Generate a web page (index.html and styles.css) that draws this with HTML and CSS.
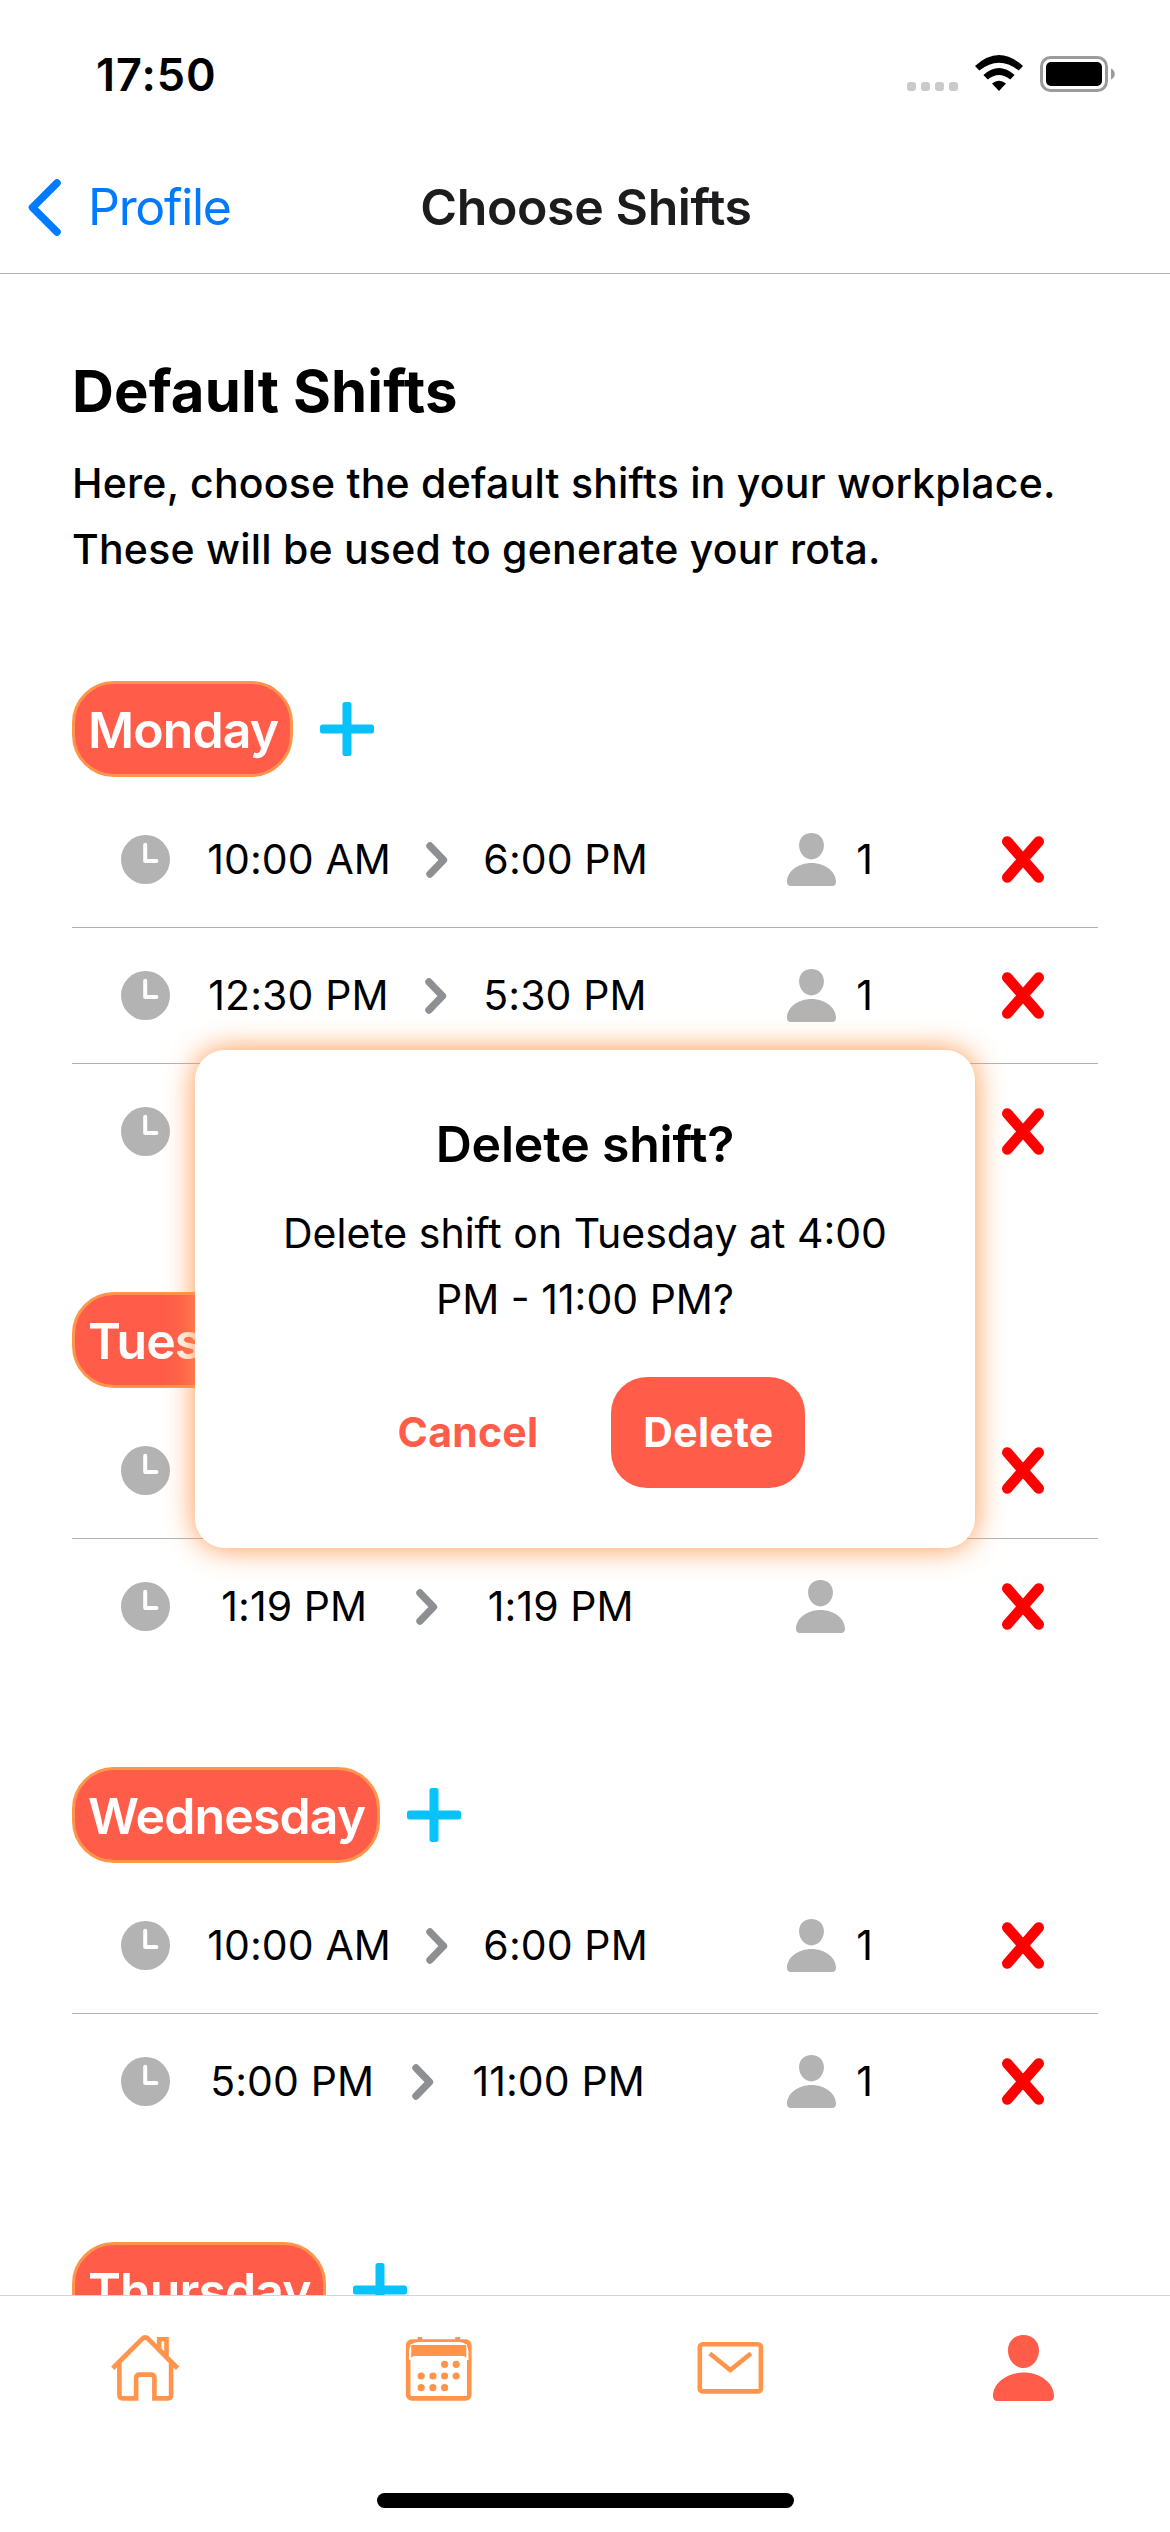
FILE: index.html
```html
<!DOCTYPE html>
<html lang="en">
<head>
<meta charset="utf-8">
<title>Choose Shifts</title>
<link rel="stylesheet" href="styles.css">
</head>
<body>
<svg class="sprite" aria-hidden="true">
  <symbol id="clock" viewBox="0 0 49 49"><circle cx="24.5" cy="24.5" r="24.5" fill="#b3b3b3"/><path d="M24.2 9.8V26H35.4" fill="none" stroke="#fff" stroke-width="4" stroke-linecap="round" stroke-linejoin="round"/></symbol>
  <symbol id="chevron" viewBox="0 0 22 36"><path d="M4 4L17.5 18L4 32" fill="none" stroke="#8e8f92" stroke-width="7.4" stroke-linecap="round" stroke-linejoin="round"/></symbol>
  <symbol id="person" viewBox="0 0 61 66"><path d="M30.5 0C39.8 0 46 6.6 46 15.4C46 25 38.8 33 30.5 33C22.2 33 15 25 15 15.4C15 6.6 21.2 0 30.5 0Z M30.5 37.5C47 37.5 61 48 61 61C61 64 59 66 56.5 66H4.5C2 66 0 64 0 61C0 48 14 37.5 30.5 37.5Z" fill="currentColor"/></symbol>
  <symbol id="plus" viewBox="0 0 54 54"><rect x="22.5" width="9" height="54" rx="2.5" fill="#07c2fb"/><rect y="22.5" width="54" height="9" rx="2.5" fill="#07c2fb"/></symbol>
  <symbol id="cross" viewBox="0 0 42 47"><path d="M5.3 5.5L36.7 41.5M36.7 5.5L5.3 41.5" stroke="#f00" stroke-width="10.6" stroke-linecap="round"/></symbol>
</svg>
<div class="screen">
  <header class="top">
    <div class="status">
      <span class="time">17:50</span>
      <span class="signal"><i></i><i></i><i></i><i></i></span>
      <svg class="wifi" viewBox="0 0 48 36"><path d="M0 11Q24 -11 48 11L43.7 15.5Q24 -0.2 4.3 15.5Z M8.4 20Q24 6 39.6 20L35.2 24.5Q24 15.300 12.800 24.500Z M17 28.600Q24 23 31 28.600L24 36Z"/></svg>
      <svg class="battery" viewBox="0 0 75 36"><rect x="1.5" y="1.5" width="65" height="33" rx="9" fill="none" stroke="#9b9b9b" stroke-width="3"/><rect x="6" y="6" width="56" height="24" rx="5"/><path d="M71 12.5C76 14.5 76 21.5 71 23.5Z" fill="#9b9b9b"/></svg>
    </div>
    <nav class="nav">
      <a class="back"><svg class="back-arrow" viewBox="0 0 33 57"><path d="M29 4L4.5 28.5L29 53" fill="none" stroke="#007aff" stroke-width="7.5" stroke-linecap="round" stroke-linejoin="round"/></svg><span>Profile</span></a>
      <h1>Choose Shifts</h1>
    </nav>
  </header>

  <main class="content">
    <h2>Default Shifts</h2>
    <p class="intro">Here, choose the default shifts in your workplace.<br>These will be used to generate your rota.</p>

    <section class="day">
      <div class="day-head"><span class="pill">Monday</span><svg class="plus"><use href="#plus"/></svg></div>
      <div class="shift"><svg class="clock"><use href="#clock"/></svg><div class="times"><span>10:00 AM</span><svg class="chev"><use href="#chevron"/></svg><span>6:00 PM</span></div><div class="people"><svg class="person"><use href="#person"/></svg><span>1</span></div><svg class="cross"><use href="#cross"/></svg></div>
      <div class="shift"><svg class="clock"><use href="#clock"/></svg><div class="times"><span>12:30 PM</span><svg class="chev"><use href="#chevron"/></svg><span>5:30 PM</span></div><div class="people"><svg class="person"><use href="#person"/></svg><span>1</span></div><svg class="cross"><use href="#cross"/></svg></div>
      <div class="shift"><svg class="clock"><use href="#clock"/></svg><div class="times"></div><div class="people"></div><svg class="cross"><use href="#cross"/></svg></div>
    </section>

    <section class="day">
      <div class="day-head"><span class="pill">Tuesday</span></div>
      <div class="shift"><svg class="clock"><use href="#clock"/></svg><div class="times"></div><div class="people"></div><svg class="cross"><use href="#cross"/></svg></div>
      <div class="shift"><svg class="clock"><use href="#clock"/></svg><div class="times"><span>1:19 PM</span><svg class="chev"><use href="#chevron"/></svg><span>1:19 PM</span></div><div class="people"><svg class="person"><use href="#person"/></svg><span></span></div><svg class="cross"><use href="#cross"/></svg></div>
    </section>

    <section class="day">
      <div class="day-head"><span class="pill">Wednesday</span><svg class="plus"><use href="#plus"/></svg></div>
      <div class="shift"><svg class="clock"><use href="#clock"/></svg><div class="times"><span>10:00 AM</span><svg class="chev"><use href="#chevron"/></svg><span>6:00 PM</span></div><div class="people"><svg class="person"><use href="#person"/></svg><span>1</span></div><svg class="cross"><use href="#cross"/></svg></div>
      <div class="shift"><svg class="clock"><use href="#clock"/></svg><div class="times"><span>5:00 PM</span><svg class="chev"><use href="#chevron"/></svg><span>11:00 PM</span></div><div class="people"><svg class="person"><use href="#person"/></svg><span>1</span></div><svg class="cross"><use href="#cross"/></svg></div>
    </section>

    <section class="day">
      <div class="day-head"><span class="pill">Thursday</span><svg class="plus"><use href="#plus"/></svg></div>
    </section>
  </main>

  <footer class="bottom">
    <div class="tabs">
      <svg class="tab" viewBox="0 0 68 68"><g fill="none" stroke="#ff944a" stroke-width="4.6"><path d="M0.8 34.2L30.2 4.9Q33.2 2.3 36.2 4.9L65.6 34.2" stroke-width="4.8"/><path d="M7.4 29V61Q7.400 64.400 10.600 64.400H24.100V44.200Q24.100 40.600 27.800 40.600H38.800Q42.400 40.600 42.400 44.200V64.400H55.900Q59.100 64.400 59.100 61V29"/><path d="M47.200 15.500V5.200H54.500V23L47.200 15.500"/></g></svg>
      <svg class="tab" viewBox="0 0 68 68"><rect x="3.2" y="7.6" width="61.1" height="56.8" rx="3.5" fill="none" stroke="#ff944a" stroke-width="4.6"/><path d="M4 26V18Q4.500 8 13 8H54.500Q63 8 63.500 18V26H61.500V24Q61 22 58 22H10Q6.500 22 6 24V26Z" fill="#fff"/><path d="M6.200 24V11H61.300V24Q60 22 57.500 22H10Q7.500 22 6.200 24Z" fill="#ff944a"/><path d="M12.600 6V3H17.200V6M50.200 6V3H55.200V6" fill="#ff944a"/><g fill="#ff944a"><circle cx="39.6" cy="30.3" r="3.6"/><circle cx="51.2" cy="30.3" r="3.6"/><circle cx="16.2" cy="42" r="3.6"/><circle cx="27.9" cy="42" r="3.6"/><circle cx="39.6" cy="42" r="3.6"/><circle cx="51.2" cy="42" r="3.6"/><circle cx="16.2" cy="53.7" r="3.6"/><circle cx="27.9" cy="53.7" r="3.6"/><circle cx="39.6" cy="53.7" r="3.6"/></g></svg>
      <svg class="tab" viewBox="0 0 68 68"><g fill="none" stroke="#ff944a" stroke-width="4.6"><rect x="2.8" y="10.3" width="61.1" height="47.1" rx="3"/><path d="M12.800 19.500L33.300 36L53.900 19.500"/></g></svg>
      <svg class="tab active"><use href="#person"/></svg>
    </div>
    <div class="home-bar"></div>
  </footer>

  <div class="dialog">
    <h3>Delete shift?</h3>
    <p>Delete shift on Tuesday at 4:00<br>PM - 11:00 PM?</p>
    <div class="actions"><button class="cancel">Cancel</button><button class="delete">Delete</button></div>
  </div>
</div>
</body>
</html>
```
FILE: styles.css
```css
* { box-sizing: border-box; margin: 0; padding: 0; }
body { background: #fff; }
svg { display: block; flex: none; }
.sprite { position: absolute; width: 0; height: 0; }

.screen {
  position: relative;
  width: 1170px;
  height: 2532px;
  display: flex;
  flex-direction: column;
  overflow: hidden;
  background: #fff;
  color: #000;
  font-family: Inter, "Liberation Sans", sans-serif;
  font-size: 41px;
}

.top { height: 274px; flex: none; border-bottom: 1px solid #b2b2b2; }
.status { display: flex; height: 141px; padding: 0 55px 0 96px; align-items: flex-start; }
.time { margin: 48px auto 0 0; font-size: 45px; line-height: 54px; font-weight: 600; letter-spacing: 1px; }
.signal { display: flex; gap: 5px; margin: 82px 17px 0 0; }
.signal i { width: 9px; height: 9px; border-radius: 3px; background: #cacaca; }
.wifi { width: 48px; height: 36px; margin: 55px 17px 0 0; }
.battery { width: 75px; height: 36px; margin-top: 56px; }

.nav { display: grid; grid-template-columns: 1fr auto 1fr; align-items: center; height: 132px; padding: 0 28px; }
.back { display: flex; align-items: center; gap: 27px; color: #007aff; font-size: 50px; line-height: 60px; letter-spacing: -1.3px; }
.back-arrow { width: 33px; height: 57px; }
.nav h1 { padding-left: 2px; color: #1c1c1e; font-size: 50px; line-height: 60px; font-weight: 600; letter-spacing: -0.4px; }

.content { flex: 1; min-height: 0; overflow: hidden; padding: 81px 72px 0; }
.content h2 { font-size: 58px; line-height: 72px; font-weight: 700; letter-spacing: 0.15px; }
.intro { margin-top: 23px; line-height: 66px; font-weight: 500; letter-spacing: 0.22px; white-space: nowrap; }

.day { margin-bottom: 92px; }
.intro + .day { margin-top: 99px; }
.day-head { display: flex; align-items: center; gap: 27px; height: 96px; margin-bottom: 15px; }
.pill {
  height: 96px;
  padding: 0 12px 0 13px;
  border: 3px solid #ff944a;
  border-radius: 42px;
  background: #ff5c49;
  color: #fff;
  font-size: 50px;
  line-height: 93px;
  font-weight: 600;
  letter-spacing: -0.9px;
}
.plus { width: 54px; height: 54px; }

.shift { display: grid; grid-template-columns: 49px 513px 294px 92px; align-items: center; height: 136px; padding-left: 49px; border-bottom: 1px solid #b2b2b2; }
.shift:last-child { border-bottom-color: transparent; }
.clock { width: 49px; height: 49px; }
.times { display: flex; align-items: center; justify-content: space-evenly; padding-left: 2px; letter-spacing: 0.1px; }
.times span, .people span { padding-bottom: 2px; }
.chev { width: 22px; height: 36px; }
.people { display: flex; align-items: center; justify-content: center; gap: 20px; }
.person { width: 49px; height: 53px; color: #b3b3b3; }
.cross { width: 42px; height: 47px; justify-self: center; }

.bottom { height: 237px; flex: none; border-top: 1px solid #d4d4d4; }
.tabs { display: grid; grid-template-columns: repeat(4, 1fr); justify-items: center; padding-top: 38px; }
.tab { width: 68px; height: 68px; overflow: visible; }
.tab.active { width: 61px; height: 66px; margin-top: 1px; color: #ff5c49; }
.home-bar { width: 417px; height: 15px; margin: 91px auto 0; border-radius: 8px; background: #000; }

.dialog {
  position: absolute;
  left: 195px;
  top: 1050px;
  width: 780px;
  height: 498px;
  padding-top: 60px;
  border-radius: 30px;
  background: #fff;
  box-shadow: 0 0 30px #ff944a;
  text-align: center;
}
.dialog h3 { font-size: 50px; line-height: 68px; font-weight: 600; letter-spacing: -0.2px; }
.dialog p { margin-top: 22px; line-height: 66px; white-space: nowrap; }
.actions { display: flex; justify-content: center; align-items: center; gap: 40px; margin-top: 45px; }
.actions button { height: 111px; padding-bottom: 2px; border: 0; border-radius: 36px; background: none; font: 700 41px Inter, "Liberation Sans", sans-serif; letter-spacing: 0.25px; }
.actions .cancel { padding: 0 33px 2px; color: #ff5c49; }
.actions .delete { width: 194px; background: #ff5c49; color: #fff; }
```
